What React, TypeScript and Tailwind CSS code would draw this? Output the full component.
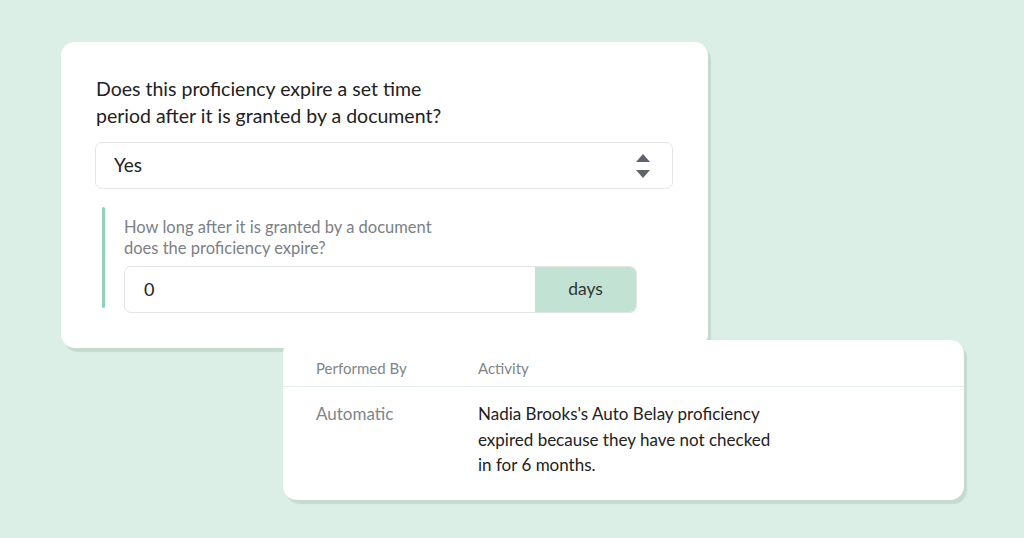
export default function App() {
  return (
    <div className="w-[1024px] h-[538px] overflow-hidden bg-[#dbefe6] font-['Lato','Noto_Sans',sans-serif]">
      <div className="relative pl-[61px] pt-[42px]">
        <div className="w-[647px] h-[306px] bg-white rounded-[14px] shadow-[3px_4px_1px_#c3dccf] pt-[33px] pl-[34px] pr-[35px]">
          <p className="text-[19.5px] leading-[27px] text-[#222] pl-[1px]">
            Does this proficiency expire a set time
            <br />
            period after it is granted by a document?
          </p>
          <div className="mt-[13px] h-[47px] border border-[#e2e6e4] rounded-[7px] flex items-center justify-between pl-[18px] pr-[22px]">
            <span className="text-[19px] text-[#222]">Yes</span>
            <span className="flex flex-col gap-[8px]">
              <svg width="14" height="8" viewBox="0 0 14 8"><path d="M7 0L14 8H0Z" fill="#5f646b" /></svg>
              <svg width="14" height="8" viewBox="0 0 14 8"><path d="M0 0H14L7 8Z" fill="#5f646b" /></svg>
            </span>
          </div>
          <div className="mt-[18px] ml-[7px] flex gap-[19px]">
            <div className="w-[3px] h-[101px] bg-[#8fd2b8] rounded-full" />
            <div className="w-[513px]">
              <p className="text-[16.5px] leading-[21px] text-[#7b8087] pt-[10px]">
                How long after it is granted by a document
                <br />
                does the proficiency expire?
              </p>
              <div className="mt-[7px] h-[47px] flex border border-[#e2e6e4] rounded-[7px] overflow-hidden">
                <div className="flex-1 flex items-center pl-[19px] text-[18px] text-[#222]">0</div>
                <div className="w-[101px] bg-[#c2e3d4] flex items-center justify-center text-[17.5px] text-[#333]">days</div>
              </div>
            </div>
          </div>
        </div>
        <div className="absolute left-[283px] top-[340px] w-[681px] h-[160px] bg-white rounded-[14px] shadow-[3px_4px_1px_#c3dccf]">
          <div className="flex h-[47px] items-center pt-[10px] px-[33px] border-b border-[#e6ecea] text-[15px] text-[#80858b]">
            <span className="w-[162px]">Performed By</span>
            <span>Activity</span>
          </div>
          <div className="flex px-[33px] pt-[14px]">
            <span className="w-[162px] text-[17px] leading-[25.5px] text-[#80858b]">Automatic</span>
            <p className="text-[17px] leading-[25.5px] text-[#222]">
              Nadia Brooks's Auto Belay proficiency
              <br />
              expired because they have not checked
              <br />
              in for 6 months.
            </p>
          </div>
        </div>
      </div>
    </div>
  );
}
